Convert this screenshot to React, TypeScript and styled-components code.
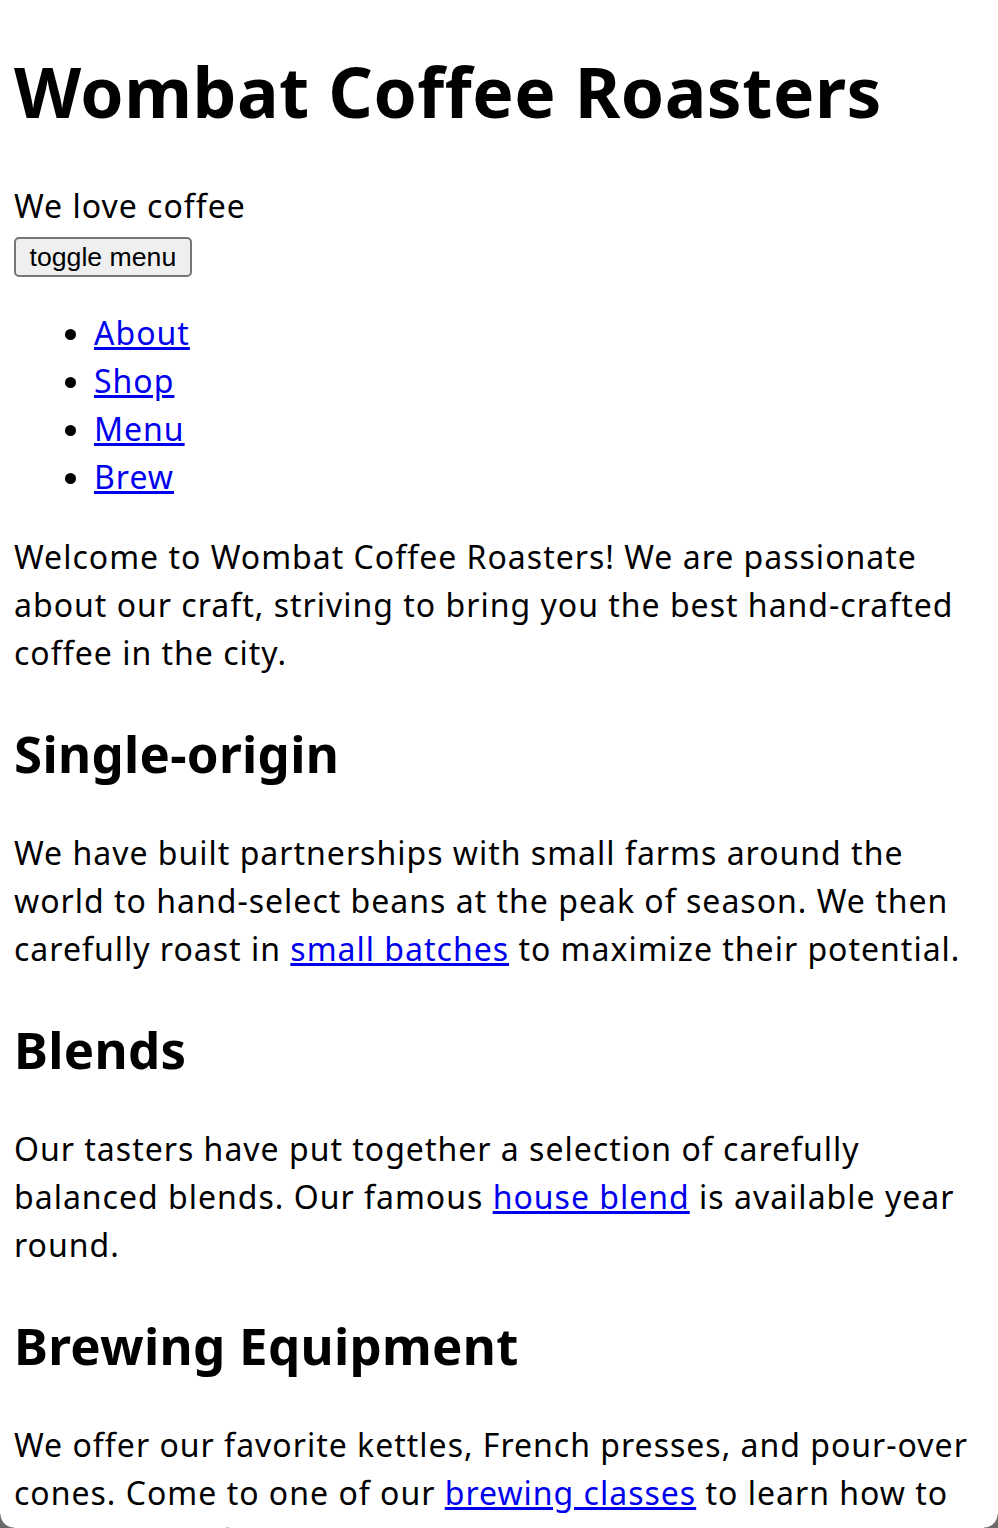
import React from "react";
import styled, { createGlobalStyle } from "styled-components";

const GlobalStyle = createGlobalStyle`
  html, body {
    background: #ffffff;
  }
  body {
    margin: 0 14px 14px;
    font-family: "Noto Sans", "Noto Sans CJK JP", sans-serif;
    font-size: 32px;
    line-height: 48px;
    letter-spacing: 1px;
    color: #000000;
  }
`;

const Header = styled.header``;

const Title = styled.h1`
  font-size: 69.5px;
  line-height: 96px;
  font-weight: 700;
  margin: 43px 0;
  letter-spacing: 0.5px;
`;

const Tagline = styled.p`
  margin: 0 0 7px;
`;

const ToggleButton = styled.button`
  display: block;
  box-sizing: border-box;
  height: 40px;
  padding: 0 13.5px;
  font-family: "Liberation Sans", Arial, sans-serif;
  font-size: 26.67px;
  letter-spacing: 0;
  color: #000000;
  background: #efefef;
  border: 2px solid #767676;
  border-radius: 5px;
`;

const NavList = styled.ul`
  margin: 32px 0;
  padding-left: 80px;
  list-style: disc;
`;

const NavItem = styled.li``;

const Link = styled.a`
  color: #0000ee;
  text-decoration: underline;
`;

const Paragraph = styled.p`
  margin: 32px 0;
`;

const Section = styled.section``;

const SectionTitle = styled.h2`
  font-size: 51px;
  line-height: 72px;
  font-weight: 700;
  margin: 40px 0;
  letter-spacing: 0.3px;
`;

const Corner = styled.div<{ $side: "left" | "right" }>`
  position: fixed;
  bottom: 0;
  ${(p) => (p.$side === "left" ? "left: 0;" : "right: 0;")}
  width: 14px;
  height: 14px;
  pointer-events: none;
  background: ${(p) =>
    p.$side === "left"
      ? "radial-gradient(circle at 100% 0, transparent 13px, #6a6a6a 14px)"
      : "radial-gradient(circle at 0 0, transparent 13px, #6a6a6a 14px)"};
`;

const navItems = ["About", "Shop", "Menu", "Brew"];

export default function App() {
  return (
    <>
      <GlobalStyle />
      <Header>
        <Title>Wombat Coffee Roasters</Title>
        <Tagline>We love coffee</Tagline>
        <ToggleButton type="button">toggle menu</ToggleButton>
        <nav>
          <NavList>
            {navItems.map((item) => (
              <NavItem key={item}>
                <Link href="#">{item}</Link>
              </NavItem>
            ))}
          </NavList>
        </nav>
      </Header>
      <main>
        <Paragraph>
          Welcome to Wombat Coffee Roasters! We are passionate about our craft,
          striving to bring you the best hand-crafted coffee in the city.
        </Paragraph>
        <Section>
          <SectionTitle>Single-origin</SectionTitle>
          <Paragraph>
            We have built partnerships with small farms around the world to
            hand-select beans at the peak of season. We then carefully roast in{" "}
            <Link href="#">small batches</Link> to maximize their potential.
          </Paragraph>
        </Section>
        <Section>
          <SectionTitle>Blends</SectionTitle>
          <Paragraph>
            Our tasters have put together a selection of carefully balanced
            blends. Our famous <Link href="#">house blend</Link> is available
            year round.
          </Paragraph>
        </Section>
        <Section>
          <SectionTitle>Brewing Equipment</SectionTitle>
          <Paragraph>
            We offer our favorite kettles, French presses, and pour-over cones.
            Come to one of our <Link href="#">brewing classes</Link> to learn how
            to brew the perfect cup.
          </Paragraph>
        </Section>
      </main>
      <Corner $side="left" />
      <Corner $side="right" />
    </>
  );
}
